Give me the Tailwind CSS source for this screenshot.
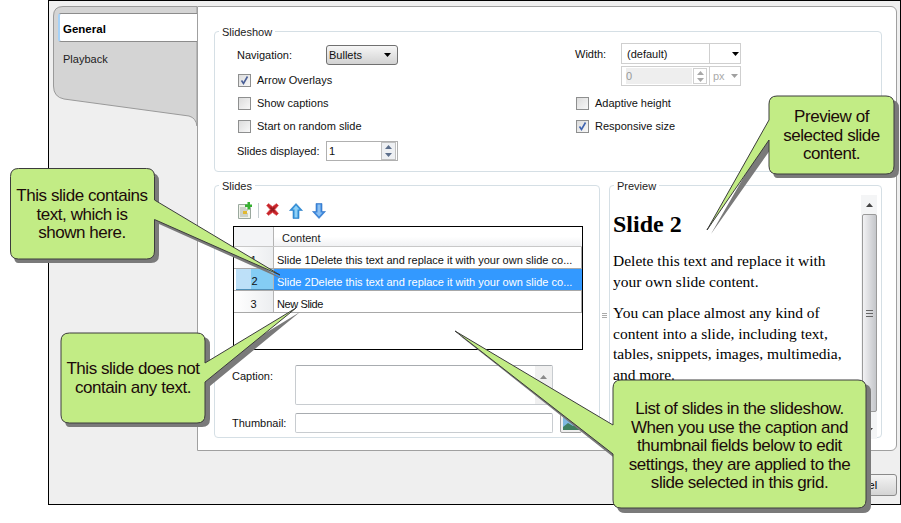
<!DOCTYPE html>
<html lang="en">
<head>
    <meta charset="UTF-8">
    <title>Slideshow Properties</title>
    <script src="https://cdn.jsdelivr.net/npm/@tailwindcss/browser@4"></script>
</head>
<body class="bg-white w-[901px] h-[523px] overflow-hidden relative font-['Liberation_Sans',sans-serif] text-[11px] leading-[14px] text-[#111]">

    <!-- dialog window -->
    <div class="ml-[48px] w-[853px] h-[505px] border border-black bg-[#efefef] pt-[5px]">
        <div class="flex h-[445px]">
            <!-- side tabs -->
            <div class="w-[148px] relative">
                <svg class="absolute left-0 top-0" width="148" height="125" viewBox="0 0 148 125">
                    <path d="M148 0.5H14Q4.500 0.500 4.500 10V80Q4.500 91 15 93L140 110Q147 112 148 120Z" fill="#d4d4d4" stroke="#9a9a9a"/>
                </svg>
                <div class="relative pl-[9px] pt-[7px]">
                    <div class="h-[29px] bg-white border-y border-[#8c8c8c] border-l-2 border-l-[#a6d2f8] rounded-l-[3px] pl-[3px] pt-[3px] flex items-center font-bold text-[11.500px] text-black">General</div>
                    <div class="h-[30px] pl-[5px] pt-[3px] flex items-center text-[#222]">Playback</div>
                </div>
            </div>

            <!-- main panel -->
            <div class="w-[700px] h-[445px] bg-white border border-[#a0a0a0] rounded-r-[6px] pl-[16px] pt-[17px]">
                <fieldset class="w-[668px] h-[148px] border border-[#d5dfe5] rounded-[4px] min-w-0 pl-[22px] flex">
                    <legend class="-ml-[18px] px-[3px] text-[#222] relative top-[1px]">Slideshow</legend>
                    <div class="flex justify-between w-full">
                        <div class="w-[300px]">
                            <div class="flex items-center h-[20px] mt-[7px]">
                                <span class="w-[89px]">Navigation:</span>
                                <div class="w-[72px] h-[20px] border border-[#707070] rounded-[3px] bg-gradient-to-b from-[#f6f6f6] to-[#d2d2d2] flex items-center justify-between pl-[2px] pr-[6px]">
                                    <span>Bullets</span>
                                    <svg width="7" height="4"><path d="M0 0H7L3.500 4Z" fill="#000"/></svg>
                                </div>
                            </div>
                            <label class="flex items-center h-[14px] mt-[8px] ml-[1px] gap-[6px]">
                                <span class="w-[13px] h-[13px] border border-[#8e8f8f] bg-gradient-to-br from-[#dcdcdc] to-[#f8f8f8] flex items-center justify-center">
                                    <svg width="9" height="9" viewBox="0 0 9 9"><path d="M1.500 4.500L3.500 7.500L7.500 0.500" fill="none" stroke="#4a5f97" stroke-width="1.600"/></svg>
                                </span>
                                Arrow Overlays
                            </label>
                            <label class="flex items-center h-[14px] mt-[9px] ml-[1px] gap-[6px]">
                                <span class="w-[13px] h-[13px] border border-[#8e8f8f] bg-gradient-to-br from-[#dcdcdc] to-[#f8f8f8]"></span>
                                Show captions
                            </label>
                            <label class="flex items-center h-[14px] mt-[9px] ml-[1px] gap-[6px]">
                                <span class="w-[13px] h-[13px] border border-[#8e8f8f] bg-gradient-to-br from-[#dcdcdc] to-[#f8f8f8]"></span>
                                Start on random slide
                            </label>
                            <div class="flex items-center h-[20px] mt-[8px]">
                                <span class="w-[89px]">Slides displayed:</span>
                                <div class="w-[72px] h-[20px] border border-[#b0b0b0] flex items-center justify-between pl-[2px]">
                                    <span>1</span>
                                    <div class="w-[15px] h-[18px] mr-[1px] border border-[#c0c0c0] flex flex-col items-center justify-around bg-[#eef0f3]">
                                        <svg width="7" height="4"><path d="M0 4H7L3.500 0Z" fill="#5d6f8c"/></svg>
                                        <svg width="7" height="4"><path d="M0 0H7L3.500 4Z" fill="#5d6f8c"/></svg>
                                    </div>
                                </div>
                            </div>
                        </div>
                        <div class="w-[306px] pt-[5px]">
                            <div class="flex items-start">
                                <span class="w-[46px] pt-[4px]">Width:</span>
                                <div class="w-[120px]">
                                    <div class="h-[21px] border border-[#cfcfcf] flex items-center">
                                        <span class="w-[88px] pl-[5px] border-r border-[#cfcfcf] h-full flex items-center">(default)</span>
                                        <span class="flex-1 flex justify-end pr-[1px]"><svg width="7" height="4"><path d="M0 0H7L3.500 4Z" fill="#000"/></svg></span>
                                    </div>
                                    <div class="h-[20px] mt-[2px] border border-[#cfcfcf] flex items-center">
                                        <span class="w-[66px] h-[16px] ml-[4px] bg-[#eeeeee] text-[#999] flex items-center">0</span>
                                        <div class="w-[14px] h-[16px] ml-[1px] border border-[#d0d0d0] flex flex-col items-center justify-around">
                                            <svg width="7" height="4"><path d="M0 4H7L3.500 0Z" fill="#a8a8a8"/></svg>
                                            <svg width="7" height="4"><path d="M0 0H7L3.500 4Z" fill="#a8a8a8"/></svg>
                                        </div>
                                        <span class="ml-[2px] w-[31px] h-full border-l border-[#cfcfcf] pl-[3px] text-[#aaa] flex items-center justify-between pr-[2px]">px<svg width="7" height="4"><path d="M0 0H7L3.500 4Z" fill="#a0a0a0"/></svg></span>
                                    </div>
                                </div>
                            </div>
                            <label class="flex items-center h-[14px] mt-[10px] ml-[1px] gap-[6px]">
                                <span class="w-[13px] h-[13px] border border-[#8e8f8f] bg-gradient-to-br from-[#dcdcdc] to-[#f8f8f8]"></span>
                                Adaptive height
                            </label>
                            <label class="flex items-center h-[14px] mt-[9px] ml-[1px] gap-[6px]">
                                <span class="w-[13px] h-[13px] border border-[#8e8f8f] bg-gradient-to-br from-[#dcdcdc] to-[#f8f8f8] flex items-center justify-center">
                                    <svg width="9" height="9" viewBox="0 0 9 9"><path d="M1.500 4.500L3.500 7.500L7.500 0.500" fill="none" stroke="#3f64b0" stroke-width="1.600"/></svg>
                                </span>
                                Responsive size
                            </label>
                        </div>
                    </div>
                </fieldset>

                <div class="flex gap-[9px] mt-[6px]">
                    <fieldset class="w-[386px] h-[260px] border border-[#d5dfe5] rounded-[4px] min-w-0 pl-[18px]">
                        <legend class="-ml-[14px] px-[3px] text-[#222] relative top-[1px]">Slides</legend>
                        <!-- toolbar -->
                        <div class="flex items-center h-[17px] mt-[10px] ml-[4px]">
                            <svg width="15" height="17" viewBox="0 0 15 17">
                                <path d="M1.500 2.500H10.500L13.500 5.500V16.500H1.500Z" fill="#f0f3ea" stroke="#9aa89e"/>
                                <path d="M3 6H9M3 8H11M3 10H6M3 12H11M3 14H11" stroke="#a8b0a4"/>
                                <rect x="6" y="9" width="4" height="3" fill="#e0b830"/>
                                <path d="M8 2.500H10.500V0H13V2.500H15V5H13V7.500H10.500V5H8Z" fill="#35b030"/>
                            </svg>
                            <span class="w-px h-[15px] bg-[#c4ccd0] ml-[6px]"></span>
                            <svg class="ml-[7px] -mt-[3px]" width="13" height="13" viewBox="0 0 13 13">
                                <path d="M0.500 2.500L2.500 0.500L6.500 3.500L10.500 0.500L12.500 2.500L9 6.500L12.500 10.500L10.500 12.500L6.500 9.500L2.500 12.500L0.500 10.500L4 6.500Z" fill="#c8252b" stroke="#e06a6a" stroke-width="0.600"/>
                                <path d="M4.500 4.500L8.500 8.500M8.500 4.500L4.500 8.500" stroke="#8e1a1e" stroke-width="1.500"/>
                            </svg>
                            <svg class="ml-[10px]" width="14" height="16" viewBox="0 0 14 16">
                                <path d="M7 0.500L13.500 7.500H10V15.500H4V7.500H0.500Z" fill="#2f8fd8" stroke="#2f80c8" stroke-width="0.600"/>
                                <path d="M7 2.500L10.500 6.500H8.500V14.500H5.500V6.500H3.500Z" fill="#8fd0f6"/>
                            </svg>
                            <svg class="ml-[9px]" width="14" height="16" viewBox="0 0 14 16">
                                <path d="M7 15.500L13.500 8.500H10V0.500H4V8.500H0.500Z" fill="#3a86dc" stroke="#3274c4" stroke-width="0.600"/>
                                <path d="M7 13.500L10.500 9.500H8.500V1.500H5.500V9.500H3.500Z" fill="#8cc0f2"/>
                            </svg>
                        </div>
                        <!-- grid -->
                        <div class="w-[350px] h-[124px] mt-[7px] border border-black">
                            <div class="flex h-[20px] border-b border-[#c8c8c8]">
                                <div class="w-[40px] bg-[#f3f4f6] border-r border-[#b4b4b4]"></div>
                                <div class="flex-1 pl-[8px] pt-[2px] flex items-center bg-gradient-to-b from-white from-50% to-[#f1f2f4] text-[#222]">Content</div>
                            </div>
                            <div class="flex h-[22px] border-b border-[#a8a8a8]">
                                <div class="w-[40px] pt-[4px] bg-gradient-to-r from-white to-[#eceef0] border-r border-[#b4b4b4] flex items-center justify-center">1</div>
                                <div class="flex-1 pl-[3px] pt-[4px] flex items-center border-r border-[#a8a8a8] whitespace-nowrap">Slide 1Delete this text and replace it with your own slide co...</div>
                            </div>
                            <div class="flex h-[22px] border-b border-[#a8a8a8]">
                                <div class="w-[38px] ml-[2px] pt-[4px] bg-gradient-to-r from-[#bde0f8] from-40% to-[#84cdf4] to-40% border-b border-[#4f8fb8] border-r border-r-[#b4b4b4] flex items-center justify-center">2</div>
                                <div class="flex-1 pl-[3px] pt-[4px] flex items-center bg-[#3399ff] text-white whitespace-nowrap">Slide 2Delete this text and replace it with your own slide co...</div>
                            </div>
                            <div class="flex h-[22px] border-b border-[#a8a8a8]">
                                <div class="w-[40px] pt-[4px] bg-gradient-to-r from-white to-[#eceef0] border-r border-[#b4b4b4] flex items-center justify-center">3</div>
                                <div class="flex-1 pl-[3px] pt-[4px] flex items-center border-r border-[#a8a8a8] tracking-[-0.400px]">New Slide</div>
                            </div>
                        </div>
                        <!-- caption / thumbnail -->
                        <div class="flex mt-[15px] -ml-[1px]">
                            <span class="w-[63px] pt-[4px]">Caption:</span>
                            <div class="w-[258px] h-[40px] border border-[#c8ccd0] border-t-[#a8acb0] rounded-[2px] flex justify-end">
                                <div class="w-[17px] h-full bg-[#f0f0f0] flex justify-center pt-[9px]">
                                    <svg width="7" height="4"><path d="M0 4H7L3.500 0Z" fill="#8a8a8a"/></svg>
                                </div>
                            </div>
                        </div>
                        <div class="flex items-center mt-[8px] -ml-[1px]">
                            <span class="w-[63px]">Thumbnail:</span>
                            <div class="w-[258px] h-[20px] border border-[#c8ccd0] border-t-[#a8acb0] rounded-[2px]"></div>
                            <div class="w-[22px] h-[19px] ml-[7px] border border-[#a0a0a0] rounded-[2px] bg-[#eeeeee] p-[2px]">
                                <svg width="16" height="13" viewBox="0 0 16 13">
                                    <rect width="16" height="13" fill="#7fb8e0"/>
                                    <path d="M0 10L5 6L10 9L16 5V13H0Z" fill="#3f7f5f"/>
                                </svg>
                            </div>
                        </div>
                    </fieldset>

                    <fieldset class="w-[273px] h-[260px] border border-[#d5dfe5] rounded-[4px] min-w-0 pl-[3px] relative">
                        <legend class="ml-[1px] px-[3px] text-[#222] relative top-[1px]">Preview</legend>
                        <!-- grip between the panes -->
                        <svg class="absolute -left-[8px] top-[121px]" width="5" height="5"><path d="M0 0.500H5M0 2.500H5M0 4.500H5" stroke="#aaa"/></svg>
                        <div class="flex h-[244px] mt-[3px] pr-[4px]">
                            <div class="flex-1 pt-[15px] pr-[10px] font-['Liberation_Serif',serif] text-[15.500px] leading-[20.500px] text-black overflow-hidden">
                                <h1 class="font-bold text-[24px] leading-[28px]">Slide 2</h1>
                                <p class="mt-[13px]">Delete this text and replace it with your own slide content.</p>
                                <p class="mt-[11px]">You can place almost any kind of content into a slide, including text, tables, snippets, images, multimedia, and more.</p>
                            </div>
                            <!-- scrollbar -->
                            <div class="w-[16px] h-full bg-[#f4f5f6] flex flex-col items-center">
                                <div class="h-[19px] flex items-center"><svg width="7" height="4"><path d="M0 4H7L3.500 0Z" fill="#444"/></svg></div>
                                <div class="w-[15px] h-[198px] border border-[#9a9a9a] rounded-[2px] bg-gradient-to-r from-[#f2f2f4] to-[#c4c6ca] flex items-center justify-center">
                                    <svg width="7" height="7"><path d="M0 0.500H7M0 3.500H7M0 6.500H7" stroke="#666"/></svg>
                                </div>
                                <div class="flex-1 flex items-end pb-[7px]"><svg width="7" height="4"><path d="M0 0H7L3.500 4Z" fill="#444"/></svg></div>
                            </div>
                        </div>
                    </fieldset>
                </div>
            </div>
        </div>
        <div class="flex justify-end pr-[3px] pt-[23px]">
            <button class="w-[74px] h-[22px] border border-[#8a8a8a] rounded-[3px] bg-gradient-to-b from-[#f4f4f4] to-[#d4d4d4] text-black">Cancel</button>
        </div>
    </div>

    <!-- callout annotations -->
    <svg class="absolute left-0 top-0 pointer-events-none" width="901" height="523" viewBox="0 0 901 523">
        <g fill="#7a7a7a">
            <path d="M18 173H151Q159 173 159 181V205L284 280L159 224V255Q159 263 151 263H18Q14 263 14 255V181Q14 173 18 173Z"/>
            <path d="M69 337H202Q210 337 210 345V367L300 312L210 386V419Q210 427 202 427H69Q65 427 65 419V345Q65 337 69 337Z"/>
            <path d="M777 100H891Q899 100 899 108V170Q899 178 891 178H777Q773 178 773 170V146L711 234L773 126V108Q773 100 777 100Z"/>
            <path d="M621 384H863Q871 384 871 392V505Q871 513 863 513H625Q617 513 617 505V460L459 335L617 431V392Q617 384 621 384Z"/>
        </g>
        <g fill="#c2ec85" stroke="#3c3c3c" stroke-width="1">
            <path d="M18.500 168.500H146.500Q154.500 168.500 154.500 176.500V200L280 275L154.500 219.500V251Q154.500 259 146.500 259H18.500Q10.500 259 10.500 251V176.500Q10.500 168.500 18.500 168.500Z"/>
            <path d="M69.500 333H197Q205 333 205 341V363L296 308L205 382V415Q205 423 197 423H69.500Q61 423 61 415V341Q61 333 69.500 333Z"/>
            <path d="M777 96H886Q894 96 894 104V166Q894 174 886 174H777Q769 174 769 166V140L707 230L769 120V104Q769 96 777 96Z"/>
            <path d="M621 380H858Q866 380 866 388V500Q866 508 858 508H621Q613 508 613 500V454L455 331L613 425V388Q613 380 621 380Z"/>
        </g>
    </svg>
    <div class="absolute left-[10px] top-[187px] w-[144px] text-center font-['Liberation_Sans',sans-serif] text-[17px] leading-[18.500px] text-[#1c0a0a] tracking-[-0.450px]">This slide contains<br>text, which is<br>shown here.</div>
    <div class="absolute left-[61px] top-[360px] w-[144px] text-center font-['Liberation_Sans',sans-serif] text-[17px] leading-[18.500px] text-[#1c0a0a] tracking-[-0.450px]">This slide does not<br>contain any text.</div>
    <div class="absolute left-[769px] top-[108px] w-[125px] text-center font-['Liberation_Sans',sans-serif] text-[17px] leading-[18.500px] text-[#1c0a0a] tracking-[-0.450px]">Preview of<br>selected slide<br>content.</div>
    <div class="absolute left-[613px] top-[400px] w-[253px] text-center font-['Liberation_Sans',sans-serif] text-[17px] leading-[18.500px] text-[#1c0a0a] tracking-[-0.450px]">List of slides in the slideshow.<br>When you use the caption and<br>thumbnail fields below to edit<br>settings, they are applied to the<br>slide selected in this grid.</div>
</body>
</html>
